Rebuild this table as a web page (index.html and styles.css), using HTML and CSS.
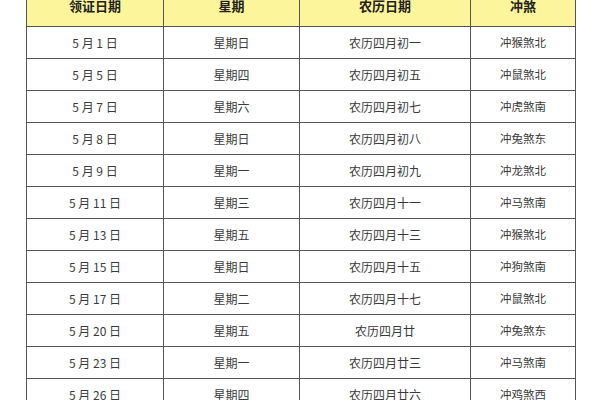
FILE: index.html
```html
<!DOCTYPE html>
<html lang="zh">
<head>
<meta charset="utf-8">
<link rel="stylesheet" href="styles.css">
</head>
<body>
<div class="page">
<table class="cal">
<colgroup><col class="c1"><col class="c2"><col class="c3"><col class="c4"></colgroup>
<thead>
<tr><th>领证日期</th><th>星期</th><th>农历日期</th><th>冲煞</th></tr>
</thead>
<tbody>
<tr><td>5 月 1 日</td><td>星期日</td><td>农历四月初一</td><td>冲猴煞北</td></tr>
<tr><td>5 月 5 日</td><td>星期四</td><td>农历四月初五</td><td>冲鼠煞北</td></tr>
<tr><td>5 月 7 日</td><td>星期六</td><td>农历四月初七</td><td>冲虎煞南</td></tr>
<tr><td>5 月 8 日</td><td>星期日</td><td>农历四月初八</td><td>冲兔煞东</td></tr>
<tr><td>5 月 9 日</td><td>星期一</td><td>农历四月初九</td><td>冲龙煞北</td></tr>
<tr><td>5 月 11 日</td><td>星期三</td><td>农历四月十一</td><td>冲马煞南</td></tr>
<tr><td>5 月 13 日</td><td>星期五</td><td>农历四月十三</td><td>冲猴煞北</td></tr>
<tr><td>5 月 15 日</td><td>星期日</td><td>农历四月十五</td><td>冲狗煞南</td></tr>
<tr><td>5 月 17 日</td><td>星期二</td><td>农历四月十七</td><td>冲鼠煞北</td></tr>
<tr><td>5 月 20 日</td><td>星期五</td><td>农历四月廿</td><td>冲兔煞东</td></tr>
<tr><td>5 月 23 日</td><td>星期一</td><td>农历四月廿三</td><td>冲马煞南</td></tr>
<tr><td>5 月 26 日</td><td>星期四</td><td>农历四月廿六</td><td>冲鸡煞西</td></tr>
</tbody>
</table>
</div>
</body>
</html>
```

FILE: styles.css
```css
html, body {
  margin: 0;
  padding: 0;
  background: #ffffff;
}
body {
  font-family: "Noto Sans CJK SC", "Noto Sans", sans-serif;
  color: #333333;
  overflow: hidden;
}
.page {
  padding-left: 26px;
  margin-top: -16px;
}
.cal {
  border-collapse: collapse;
  table-layout: fixed;
  width: 549px;
}
.c1 { width: 137px; }
.c2 { width: 136px; }
.c3 { width: 171px; }
.c4 { width: 105px; }
.cal th,
.cal td {
  border: 1px solid #555555;
  text-align: center;
  padding: 0;
  white-space: nowrap;
}
.cal th {
  height: 41px;
  background: #fdf59c;
  font-size: 13px;
  font-weight: 700;
  color: #222222;
  line-height: 1;
}
.cal td {
  height: 31px;
  font-size: 12px;
  line-height: 1;
  color: #3a3a3a;
}
.cal td:nth-child(4) {
  font-size: 11.5px;
}
```
